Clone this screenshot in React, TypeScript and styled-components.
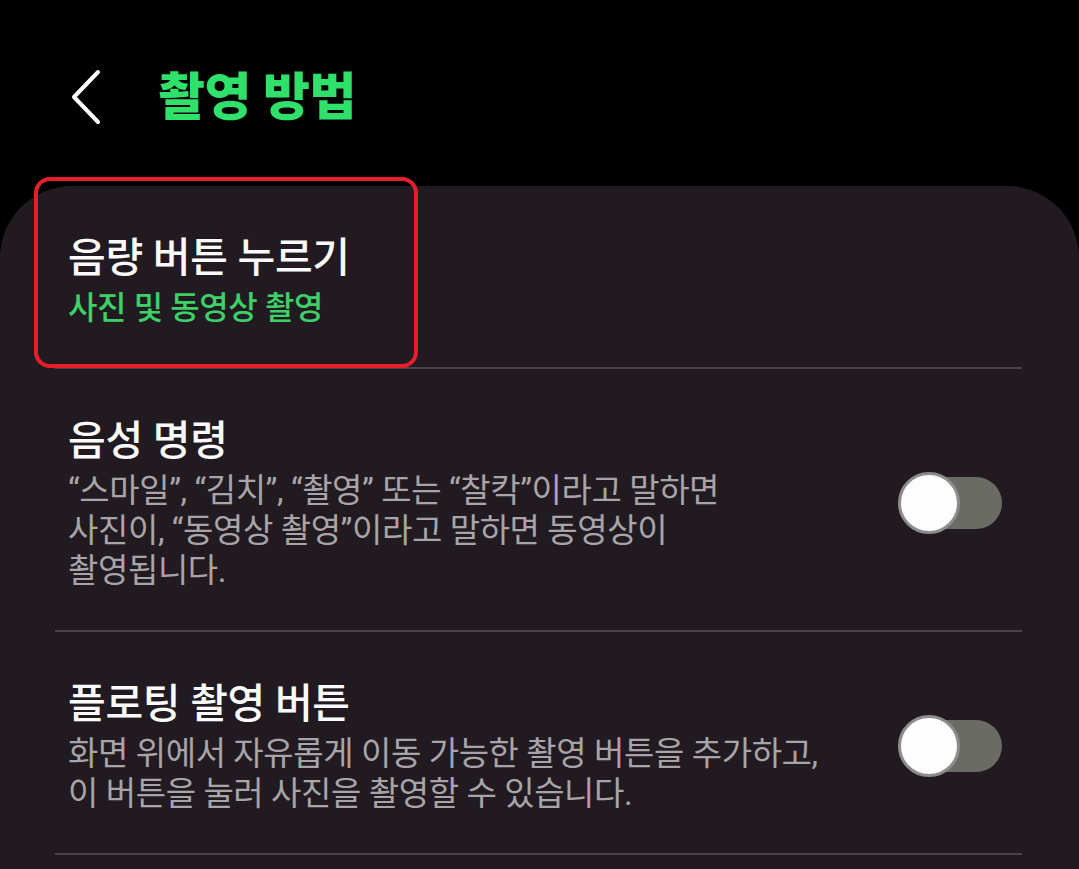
import React from 'react';
import styled, { createGlobalStyle } from 'styled-components';

const Color = {
  Black: '#000000',
  Card: '#211b21',
  Divider: '#4a434a',
  White: '#fafafa',
  Gray: '#a8a4a8',
  Green: '#2fe06a',
  GreenSoft: '#3dd068',
  Track: '#6a6b65',
  KnobBorder: '#8c8c8c',
  Red: '#e81f2b',
};

const FONT = `Roboto, "Noto Sans CJK KR", "Noto Sans", sans-serif`;

const GlobalStyle = createGlobalStyle`
  html, body {
    margin: 0;
    padding: 0;
    background: ${Color.Black};
    font-family: ${FONT};
  }
  body {
    width: 1079px;
    height: 869px;
    overflow: hidden;
  }
`;

const Screen = styled.div`
  width: 1079px;
  height: 869px;
  background: ${Color.Black};
  display: flex;
  flex-direction: column;
  overflow: hidden;
`;

const Header = styled.header`
  height: 186px;
  flex-shrink: 0;
  display: flex;
  align-items: flex-start;
  padding: 68px 0 0 66px;
  box-sizing: border-box;
  gap: 52px;
`;

const BackButton = styled.button`
  width: 40px;
  height: 58px;
  padding: 0;
  border: none;
  background: transparent;
  display: flex;
  align-items: center;
  justify-content: center;
`;

const Title = styled.h1`
  margin: 0;
  font-family: ${FONT};
  font-size: 51px;
  font-weight: 800;
  line-height: 60px;
  color: ${Color.Green};
  letter-spacing: -0.5px;
`;

const Card = styled.section`
  flex: 1;
  background: ${Color.Card};
  border-radius: 72px 72px 0 0;
  padding: 0 57px 0 55px;
`;

const Row = styled.div`
  position: relative;
  display: flex;
  align-items: center;
  gap: 24px;
  padding: 46px 20px 39px 13px;
  border-bottom: 2px solid ${Color.Divider};
`;

const TextBlock = styled.div`
  flex: 1;
  display: flex;
  flex-direction: column;
  gap: 4px;
`;

const RowTitle = styled.div`
  font-size: 41px;
  font-weight: 500;
  line-height: 52px;
  color: ${Color.White};
  letter-spacing: -0.3px;
`;

const RowSub = styled.div<{ $accent?: boolean }>`
  font-size: ${(p) => (p.$accent ? 32 : 33)}px;
  font-weight: ${(p) => (p.$accent ? 500 : 400)};
  line-height: 40px;
  color: ${(p) => (p.$accent ? Color.GreenSoft : Color.Gray)};
  letter-spacing: -0.4px;
  white-space: nowrap;
`;

const Highlight = styled.div`
  position: absolute;
  left: -21px;
  top: -9px;
  width: 384px;
  height: 191px;
  box-sizing: border-box;
  border: 4px solid ${Color.Red};
  border-radius: 16px;
  pointer-events: none;
`;

const Switch = styled.div`
  position: relative;
  width: 104px;
  height: 62px;
  flex-shrink: 0;
`;

const Track = styled.div`
  position: absolute;
  left: 6px;
  right: 0;
  top: 5px;
  height: 52px;
  border-radius: 26px;
  background: ${Color.Track};
`;

const Knob = styled.div`
  position: absolute;
  left: 0;
  top: 0;
  width: 62px;
  height: 62px;
  box-sizing: border-box;
  border-radius: 50%;
  background: #fdfdfd;
  border: 3px solid ${Color.KnobBorder};
`;

const Toggle = (): JSX.Element => (
  <Switch>
    <Track />
    <Knob />
  </Switch>
);

const ChevronLeft = (): JSX.Element => (
  <svg width="34" height="56" viewBox="0 0 34 56" fill="none">
    <path d="M29 3 L5 28 L29 53" stroke="#ffffff" strokeWidth="4" strokeLinecap="round" strokeLinejoin="round" />
  </svg>
);

const App = (): JSX.Element => {
  return (
    <>
      <GlobalStyle />
      <Screen>
        <Header>
          <BackButton aria-label="뒤로">
            <ChevronLeft />
          </BackButton>
          <Title>촬영 방법</Title>
        </Header>
        <Card>
          <Row>
            <Highlight />
            <TextBlock>
              <RowTitle>음량 버튼 누르기</RowTitle>
              <RowSub $accent>사진 및 동영상 촬영</RowSub>
            </TextBlock>
          </Row>
          <Row>
            <TextBlock>
              <RowTitle>음성 명령</RowTitle>
              <RowSub>
                “스마일”, “김치”, “촬영” 또는 “찰칵”이라고 말하면
                <br />
                사진이, “동영상 촬영”이라고 말하면 동영상이
                <br />
                촬영됩니다.
              </RowSub>
            </TextBlock>
            <Toggle />
          </Row>
          <Row>
            <TextBlock>
              <RowTitle>플로팅 촬영 버튼</RowTitle>
              <RowSub>
                화면 위에서 자유롭게 이동 가능한 촬영 버튼을 추가하고,
                <br />
                이 버튼을 눌러 사진을 촬영할 수 있습니다.
              </RowSub>
            </TextBlock>
            <Toggle />
          </Row>
        </Card>
      </Screen>
    </>
  );
};

export default App;
